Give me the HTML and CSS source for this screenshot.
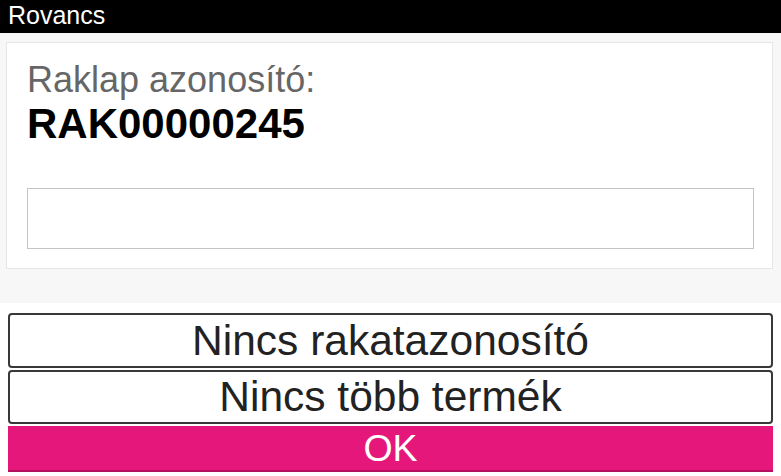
FILE: index.html
```html
<!DOCTYPE html>
<html lang="hu">
<head>
<meta charset="utf-8">
<title>Rovancs</title>
<link rel="stylesheet" href="styles.css">
</head>
<body>
<header class="topbar">Rovancs</header>
<main class="content">
  <section class="card">
    <div class="label">Raklap azonosító:</div>
    <div class="code">RAK00000245</div>
    <input class="field" type="text">
  </section>
</main>
<div class="actions">
  <button class="btn btn-first">Nincs rakatazonosító</button>
  <button class="btn">Nincs több termék</button>
  <button class="btn-ok">OK</button>
</div>
</body>
</html>
```
FILE: styles.css
```css
html, body {
  margin: 0;
  padding: 0;
  background: #ffffff;
  font-family: "Liberation Sans", Arial, sans-serif;
}
.topbar {
  height: 33px;
  background: #000000;
  color: #ffffff;
  font-size: 25px;
  line-height: 30px;
  padding-left: 8px;
  box-sizing: border-box;
}
.content {
  background: #f7f7f7;
  padding: 9px 8px 34px 6px;
}
.card {
  background: #ffffff;
  border: 1px solid #e6e6e6;
  padding: 17px 18px 19px 20px;
}
.label {
  color: #666666;
  font-size: 36px;
  line-height: 40px;
}
.code {
  color: #000000;
  font-weight: bold;
  font-size: 42px;
  line-height: 48px;
}
.field {
  display: block;
  box-sizing: border-box;
  width: 100%;
  height: 61px;
  margin-top: 40px;
  border: 1px solid #c4c4c4;
  background: #ffffff;
  padding: 0 10px;
  font-size: 24px;
  font-family: inherit;
  outline: none;
}
.actions {
  display: flex;
  flex-direction: column;
  padding: 10px 8px 0 8px;
}
.btn {
  height: 54px;
  margin-bottom: 2px;
  background: #ffffff;
  border: 2px solid #383838;
  border-radius: 4px;
  color: #222222;
  font-family: "Liberation Sans", Arial, sans-serif;
  font-size: 42.5px;
  line-height: 48px;
  padding: 0;
}
.btn-first {
  height: 55px;
  margin-bottom: 2px;
}
.btn-ok {
  height: 46px;
  background: #e5177b;
  border: none;
  border-bottom: 2px solid #b3105e;
  border-radius: 0;
  color: #ffffff;
  font-family: "Liberation Sans", Arial, sans-serif;
  font-size: 37.5px;
  line-height: 44px;
  padding: 0;
}
```
